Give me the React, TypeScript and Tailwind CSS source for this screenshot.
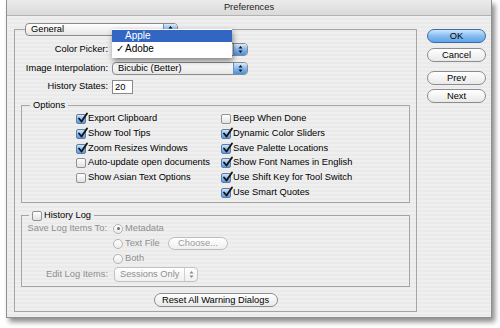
import React from 'react';

// --- Small Aqua-style controls ---

const Arrows = ({ color = '#111' }: { color?: string }) => (
  <svg width="5" height="9" viewBox="0 0 5 9">
    <path d="M0.5 3.5 L2.5 1 L4.5 3.5 Z" fill={color} />
    <path d="M0.5 5.5 L2.5 8 L4.5 5.5 Z" fill={color} />
  </svg>
);

function Checkbox({ checked }: { checked?: boolean }) {
  return (
    <span
      className={`relative inline-block w-[10px] h-[10px] rounded-[2px] border shrink-0 ${
        checked
          ? 'border-[#5a7ca8] bg-linear-to-b from-[#d2e5f9] via-[#8fbcee] to-[#5b9ae0]'
          : 'border-[#929292] bg-linear-to-b from-white to-[#e2e2e2]'
      }`}
    >
      {checked && (
        <svg width="12" height="12" viewBox="0 0 12 12" className="absolute left-[0px] top-[-3px]">
          <path d="M2 6.5 L4.5 9.5 L10 1.5" fill="none" stroke="#151515" strokeWidth="1.9" strokeLinecap="round" strokeLinejoin="round" />
        </svg>
      )}
    </span>
  );
}

function Radio({ on }: { on?: boolean }) {
  return (
    <span className="relative flex items-center justify-center w-[10px] h-[10px] rounded-full border border-[#b4b4b4] bg-linear-to-b from-white to-[#ececec] shrink-0">
      {on && <span className="w-[3px] h-[3px] rounded-full bg-[#6e6e6e]" />}
    </span>
  );
}

function Popup({ label, className }: { label: string; className: string }) {
  return (
    <div className={`flex h-[13px] rounded-[4px] border border-[#8a8a8a] bg-linear-to-b from-white to-[#e6e6e6] overflow-hidden ${className}`}>
      <span className="flex-1 pl-[5px] leading-[11px]">{label}</span>
      <span className="w-[14px] flex items-center justify-center border-l border-[#6f8fb8] bg-linear-to-b from-[#dbeafb] via-[#86b7ec] to-[#4b8ede]">
        <Arrows />
      </span>
    </div>
  );
}

function Button({ children, primary, className = '' }: { children: React.ReactNode; primary?: boolean; className?: string }) {
  return (
    <div
      className={`h-[14px] rounded-full border text-center leading-[12px] ${
        primary
          ? 'border-[#3f6b9e] bg-linear-to-b from-[#cfe5fb] via-[#86bdf0] to-[#5ea4e8]'
          : 'border-[#8c8c8c] bg-linear-to-b from-white to-[#e9e9e9]'
      } ${className}`}
    >
      {children}
    </div>
  );
}

const leftOptions = [
  { label: 'Export Clipboard', on: true },
  { label: 'Show Tool Tips', on: true },
  { label: 'Zoom Resizes Windows', on: true },
  { label: 'Auto-update open documents', on: false },
  { label: 'Show Asian Text Options', on: false },
];

const rightOptions = [
  { label: 'Beep When Done', on: false },
  { label: 'Dynamic Color Sliders', on: true },
  { label: 'Save Palette Locations', on: true },
  { label: 'Show Font Names in English', on: true },
  { label: 'Use Shift Key for Tool Switch', on: true },
  { label: 'Use Smart Quotes', on: true },
];

export default function App() {
  return (
    <div className="w-[500px] h-[328px] bg-white overflow-hidden font-['Liberation_Sans',Arial,sans-serif] text-[9.3px] text-black">
      <div className="relative ml-[6px] w-[486px] h-[318px] border-x border-b border-[#8f8f8f] shadow-[3px_4px_5px_rgba(0,0,0,0.45)] bg-[repeating-linear-gradient(180deg,#efefef_0px,#efefef_2px,#eaeaea_2px,#eaeaea_4px)]">
        {/* Title bar */}
        <div className="h-[16px] border-b border-[#b3b3b3] bg-linear-to-b from-[#ebebeb] to-[#dadada] flex items-center justify-center text-[#222] leading-none">
          Preferences
        </div>

        {/* Body */}
        <div className="flex pl-[7px] pt-[7px]">
          <fieldset className="w-[403px] h-[289px] border border-[#a5a5a5] m-0 p-0 min-w-0">
            <legend className="ml-[10px] p-0">
              <Popup label="General" className="w-[153px]" />
            </legend>

            <div className="flex flex-col">
              <div className="mt-[7px] flex items-center h-[13px]">
                <span className="w-[93px] text-right">Color Picker:</span>
                {/* value hidden under the open menu */}
                <Popup label="" className="ml-[4px] w-[136px]" />
              </div>
              <div className="mt-[6px] flex items-center h-[13px]">
                <span className="w-[93px] text-right">Image Interpolation:</span>
                <Popup label="Bicubic (Better)" className="ml-[4px] w-[136px]" />
              </div>
              <div className="mt-[5px] flex items-center h-[14px]">
                <span className="w-[93px] text-right">History States:</span>
                <div className="ml-[4px] w-[21px] h-[14px] border border-[#8a8a8a] bg-white pl-[2px] leading-[12px]">20</div>
              </div>

              {/* Options */}
              <fieldset className="ml-[6px] mt-[6px] w-[389px] h-[103px] border border-[#a5a5a5] m-0 p-0 min-w-0">
                <legend className="ml-[8px] px-[3px] leading-[11px]">Options</legend>
                <div className="mt-[1px] pl-[54px] flex">
                  <div className="w-[145px] flex flex-col">
                    {leftOptions.map((o) => (
                      <div key={o.label} className="h-[14.67px] flex items-center gap-[2px] whitespace-nowrap">
                        <Checkbox checked={o.on} />
                        <span>{o.label}</span>
                      </div>
                    ))}
                  </div>
                  <div className="flex flex-col">
                    {rightOptions.map((o) => (
                      <div key={o.label} className="h-[14.67px] flex items-center gap-[2px] whitespace-nowrap">
                        <Checkbox checked={o.on} />
                        <span>{o.label}</span>
                      </div>
                    ))}
                  </div>
                </div>
              </fieldset>

              {/* History Log */}
              <fieldset className="ml-[6px] mt-[7px] w-[389px] h-[77px] border border-[#a5a5a5] m-0 p-0 min-w-0">
                <legend className="ml-[7px] px-[3px] leading-[11px]">
                  <span className="flex items-center gap-[2px]">
                    <Checkbox />
                    <span>History Log</span>
                  </span>
                </legend>
                <div className="flex flex-col text-[#8e8e8e]">
                  <div className="h-[15px] flex items-center">
                    <span className="w-[85px] text-right">Save Log Items To:</span>
                    <span className="ml-[6px] flex items-center gap-[2px]">
                      <Radio on />
                      <span>Metadata</span>
                    </span>
                  </div>
                  <div className="h-[15px] flex items-center">
                    <span className="w-[85px]" />
                    <span className="ml-[6px] flex items-center gap-[2px]">
                      <Radio />
                      <span className="w-[43px]">Text File</span>
                    </span>
                    <div className="w-[60px] h-[13px] rounded-full border border-[#bcbcbc] bg-linear-to-b from-white to-[#efefef] text-center leading-[11px] text-[#9a9a9a]">
                      Choose...
                    </div>
                  </div>
                  <div className="h-[15px] flex items-center">
                    <span className="w-[85px]" />
                    <span className="ml-[6px] flex items-center gap-[2px]">
                      <Radio />
                      <span>Both</span>
                    </span>
                  </div>
                  <div className="mt-[1px] h-[15px] flex items-center">
                    <span className="w-[86px] text-right">Edit Log Items:</span>
                    <div className="ml-[6px] w-[84px] h-[15px] flex rounded-[4px] border border-[#c2c2c2] bg-linear-to-b from-white to-[#f0f0f0]">
                      <span className="flex-1 pl-[5px] leading-[13px]">Sessions Only</span>
                      <span className="w-[13px] flex items-center justify-center border-l border-[#d0d0d0]">
                        <Arrows color="#8a8a8a" />
                      </span>
                    </div>
                  </div>
                </div>
              </fieldset>

              <Button className="mt-[6px] self-center w-[124px]">Reset All Warning Dialogs</Button>
            </div>
          </fieldset>

          {/* Right buttons */}
          <div className="ml-[10px] pt-[6px] flex flex-col w-[59px]">
            <Button primary>OK</Button>
            <Button className="mt-[5px]">Cancel</Button>
            <Button className="mt-[9px]">Prev</Button>
            <Button className="mt-[4px]">Next</Button>
          </div>
        </div>

        {/* Open Color Picker menu */}
        <div className="absolute left-[105px] top-[29px] w-[120px] h-[29px] bg-white shadow-[1px_3px_6px_rgba(0,0,0,0.45)] pt-[1px] text-[10px]">
          <div className="h-[12px] bg-[#3266c2] text-white pl-[13px] leading-[12px]">Apple</div>
          <div className="h-[13px] flex items-center pl-[4px]">
            <span className="w-[9px]">✓</span>
            <span>Adobe</span>
          </div>
        </div>
      </div>
    </div>
  );
}
